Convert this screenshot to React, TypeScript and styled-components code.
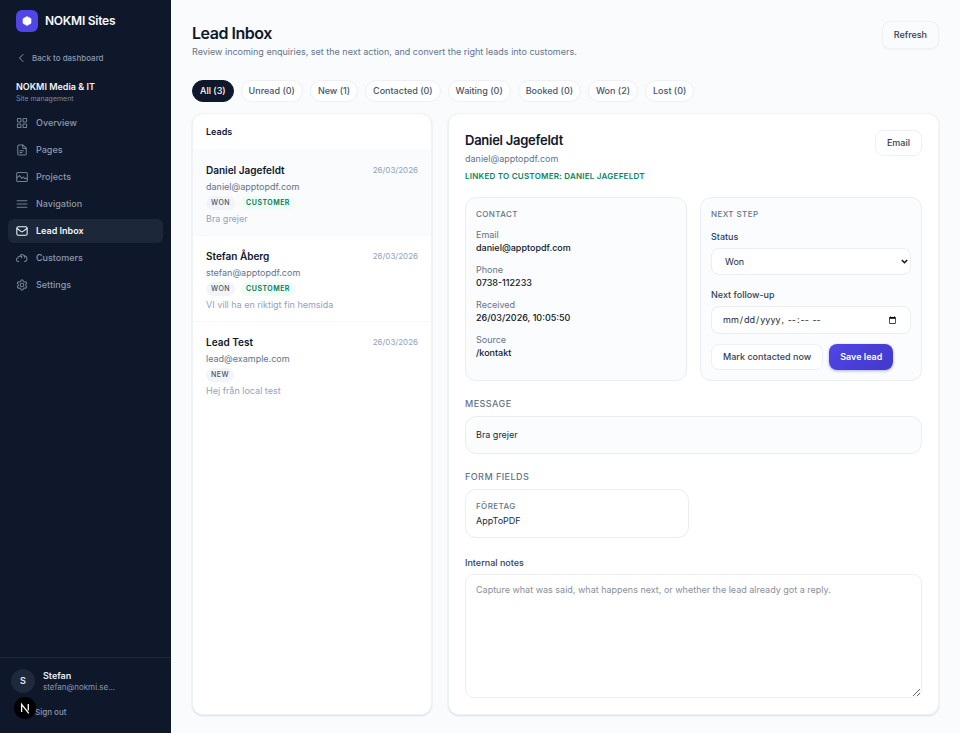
import React from "react";
import styled, { createGlobalStyle, css } from "styled-components";

const GlobalStyle = createGlobalStyle`
  *, *::before, *::after { box-sizing: border-box; }
  body { margin: 0; background: #f9fbfd; color: #0f172a; font-family: Inter, sans-serif; font-size: 9px; line-height: 14px; -webkit-font-smoothing: antialiased; }
  h1, h2, h3, p, dl, dd, ul { margin: 0; padding: 0; }
  ul { list-style: none; }
  button, input, select, textarea { font: inherit; color: inherit; }
  button { cursor: pointer; }
  a { color: inherit; text-decoration: none; }
`;

const Shell = styled.div`
  display: flex;
  min-height: 100vh;
`;

/* Sidebar */
const Sidebar = styled.aside`
  position: sticky;
  top: 0;
  flex: none;
  display: flex;
  flex-direction: column;
  width: 171px;
  height: 100vh;
  background: #0f172a;
  color: #8c99ad;
`;

const Brand = styled.div`
  display: flex;
  align-items: center;
  gap: 7px;
  height: 42px;
  padding: 0 16px;
  color: #f8fafc;
  font-size: 12px;
  font-weight: 600;
  letter-spacing: -0.02em;
`;

const BrandMark = styled.span`
  display: grid;
  place-items: center;
  width: 22px;
  height: 22px;
  border-radius: 6px;
  background: #5146e5;
`;

const BackLink = styled.a`
  display: flex;
  align-items: center;
  gap: 6px;
  margin: 9px 16px 0;
  font-size: 8px;
  font-weight: 500;
`;

const SiteInfo = styled.div`
  padding: 15px 16px 0;
`;

const SiteName = styled.div`
  color: #f1f5f9;
  font-size: 9px;
  font-weight: 600;
  line-height: 13px;
`;

const SiteCaption = styled.div`
  color: #7c8aa0;
  font-size: 7px;
  line-height: 11px;
`;

const NavList = styled.ul`
  display: flex;
  flex-direction: column;
  gap: 3px;
  padding: 7px 8px 0;
`;

const NavIcon = styled.svg`
  width: 12px;
  height: 12px;
  flex: none;
  fill: none;
  stroke: #718096;
  stroke-width: 1.5;
  stroke-linecap: round;
  stroke-linejoin: round;
`;

const NavLink = styled.a<{ $active?: boolean }>`
  display: flex;
  align-items: center;
  gap: 8px;
  height: 24px;
  padding: 0 8px;
  border-radius: 6px;
  font-weight: 500;
  ${(p) =>
    p.$active &&
    css`
      background: #1c283a;
      color: #f1f5f9;
      font-weight: 600;
      ${NavIcon} { stroke: #f1f5f9; }
    `}
`;

const Account = styled.div`
  margin-top: auto;
  padding: 11px 11px 14px;
  border-top: 1px solid #1c273a;
`;

const Profile = styled.div`
  display: flex;
  align-items: center;
  gap: 8px;
`;

const Avatar = styled.span`
  display: grid;
  place-items: center;
  width: 24px;
  height: 24px;
  border-radius: 50%;
  background: #1e293b;
  color: #e2e8f0;
  font-weight: 600;
`;

const ProfileName = styled.div`
  color: #e7ecf2;
  font-weight: 600;
  line-height: 13px;
`;

const ProfileEmail = styled.div`
  font-size: 8px;
  line-height: 11px;
`;

const SignOut = styled.button`
  display: block;
  margin-top: 12px;
  padding: 0 0 0 24px;
  border: 0;
  background: none;
  font-size: 8px;
  font-weight: 500;
  line-height: 14px;
`;

const DevBadge = styled.button`
  position: fixed;
  left: 14px;
  bottom: 14px;
  display: grid;
  place-items: center;
  width: 22px;
  height: 22px;
  padding: 0;
  border: 0;
  border-radius: 50%;
  background: #000;
`;

/* Main */
const Main = styled.main`
  flex: 1;
  min-width: 0;
  display: flex;
  flex-direction: column;
  padding: 21px 21px 18px;
`;

const PageHead = styled.header`
  display: flex;
  justify-content: space-between;
  align-items: flex-start;
`;

const PageTitle = styled.h1`
  margin-top: 2px;
  font-size: 16px;
  font-weight: 600;
  line-height: 20px;
  letter-spacing: -0.03em;
`;

const PageText = styled.p`
  margin-top: 2px;
  color: #64748b;
`;

const Button = styled.button<{ $primary?: boolean; $tall?: boolean }>`
  height: ${(p) => (p.$tall ? 28 : 26)}px;
  padding: 0 11px;
  border: 1px solid #edf1f5;
  border-radius: 8px;
  background: #fff;
  color: #334155;
  font-weight: 500;
  white-space: nowrap;
  ${(p) => p.$tall && css`background: #fafbfd; box-shadow: 0 1px 2px rgba(15, 23, 42, 0.03);`}
  ${(p) =>
    p.$primary &&
    css`
      padding: 0 10px;
      border-color: transparent;
      background: linear-gradient(135deg, #4f46e5, #4338ca) border-box;
      color: #fff;
      font-weight: 600;
      box-shadow: 0 1px 3px rgba(67, 56, 202, 0.4);
    `}
`;

const Filters = styled.nav`
  display: flex;
  flex-wrap: wrap;
  gap: 7px;
  margin: 21px 0 11px;
`;

const Filter = styled.button<{ $active?: boolean }>`
  height: 22px;
  padding: 0 7px;
  border: 1px solid ${(p) => (p.$active ? "#0f172a" : "#edf1f5")};
  border-radius: 11px;
  background: ${(p) => (p.$active ? "#0f172a" : "#fff")};
  color: ${(p) => (p.$active ? "#fff" : "#475569")};
  font-weight: 500;
`;

const Columns = styled.div`
  flex: 1;
  display: grid;
  grid-template-columns: 240px minmax(0, 1fr);
  gap: 16px;
`;

const Panel = styled.section`
  border: 1px solid #eff3f7;
  border-radius: 11px;
  background: #fff;
  box-shadow: 0 1px 2px rgba(15, 23, 42, 0.12);
  overflow: hidden;
`;

const PanelTitle = styled.h2`
  padding: 11px 13px 10px;
  border-bottom: 1px solid #f8fafc;
  font-size: 9px;
  font-weight: 600;
`;

const Lead = styled.li<{ $selected?: boolean }>`
  padding: 12px 13px 9px;
  border-bottom: 1px solid #f6f8fb;
  background: ${(p) => (p.$selected ? "#f9fbfd" : "#fff")};
  &:last-child { border-bottom: 0; }
`;

const LeadTop = styled.div`
  display: flex;
  justify-content: space-between;
  align-items: center;
`;

const LeadName = styled.h3`
  font-size: 10px;
  font-weight: 600;
  line-height: 16px;
`;

const LeadDate = styled.time`
  color: #94a3b8;
  font-size: 8px;
`;

const LeadEmail = styled.div`
  margin-top: 2px;
  color: #64748b;
`;

const Tags = styled.div`
  display: flex;
  gap: 6px;
  margin-top: 2px;
`;

const Tag = styled.span<{ $green?: boolean }>`
  height: 14px;
  padding: 0 5px;
  border-radius: 7px;
  background: ${(p) => (p.$green ? "#eefdf6" : "#f1f5f9")};
  color: ${(p) => (p.$green ? "#047857" : "#475569")};
  font-size: 7px;
  font-weight: ${(p) => (p.$green ? 600 : 500)};
  line-height: 14px;
  letter-spacing: 0.07em;
`;

const LeadText = styled.p`
  margin-top: 2px;
  color: #94a3b8;
`;

const Detail = styled(Panel)`
  padding: 16px;
`;

const DetailHead = styled.div`
  display: flex;
  justify-content: space-between;
  align-items: flex-start;
`;

const DetailName = styled.h2`
  font-size: 13px;
  font-weight: 600;
  line-height: 20px;
  letter-spacing: -0.02em;
`;

const DetailEmail = styled.p`
  margin-top: 2px;
  color: #64748b;
`;

const Linked = styled.p`
  margin-top: 3px;
  color: #05875f;
  font-size: 8px;
  font-weight: 600;
  letter-spacing: 0.03em;
`;

const Cards = styled.div`
  display: grid;
  grid-template-columns: 1fr 1fr;
  gap: 13px;
  margin-top: 14px;
`;

const Card = styled.div<{ $white?: boolean }>`
  padding: ${(p) => (p.$white ? "10px 10px 9px" : "10px")};
  border: 1px solid #e9eef3;
  border-radius: 11px;
  background: ${(p) => (p.$white ? "#fff" : "#fafcfd")};
`;

const CardTitle = styled.h3`
  color: #64748b;
  font-size: 8px;
  font-weight: 500;
  line-height: 12px;
  letter-spacing: 0.05em;
`;

const Facts = styled.dl`
  display: grid;
  gap: 8px;
  margin-top: 8px;
`;

const FactLabel = styled.dt`
  color: #64748b;
  line-height: 13px;
`;

const FactValue = styled.dd`
  font-weight: 500;
  color: #0f172a;
  line-height: 14px;
`;

const Label = styled.label`
  display: block;
  color: #334155;
  font-weight: 500;
`;

const Field = styled.div`
  margin-top: 10px;
  & + & { margin-top: 13px; }
`;

const controlStyle = css`
  display: block;
  width: 100%;
  border: 1px solid #e9eef3;
  border-radius: 8px;
  background: #fff;
  color: #1e293b;
`;

const SelectBox = styled.div`
  position: relative;
  margin-top: 4px;
`;

const Select = styled.select`
  ${controlStyle}
  appearance: none;
  height: 27px;
  padding: 0 13px;
`;

const Chevron = styled.svg`
  position: absolute;
  top: 10px;
  right: 3px;
  width: 7px;
  height: 7px;
  fill: none;
  stroke: #111;
  stroke-width: 1.5;
  pointer-events: none;
`;

const DateInput = styled.input`
  ${controlStyle}
  height: 28px;
  margin-top: 4px;
  padding: 0 11px 0 10px;
`;

const Actions = styled.div`
  display: flex;
  flex-wrap: wrap;
  gap: 6px;
  margin-top: 10px;
`;

const SectionTitle = styled.h3`
  margin: 16px 0 5px;
  color: #64748b;
  font-size: 9px;
  font-weight: 500;
  letter-spacing: 0.05em;
`;

const Message = styled(Card)`
  padding: 11px 10px;
  color: #1e293b;
`;

const FormFields = styled.div`
  display: grid;
  grid-template-columns: 1fr 1fr;
  gap: 9px;
`;

const FieldValue = styled.p`
  margin-top: 2px;
  color: #1e293b;
`;

const Notes = styled.div`
  margin-top: 18px;
`;

const TextArea = styled.textarea`
  ${controlStyle}
  height: 124px;
  margin-top: 4px;
  padding: 8px 10px;
  border-radius: 9px;
  resize: vertical;
  &::placeholder { color: #8a8f98; }
`;

const navItems = [
  { label: "Overview", icon: <><rect x="2" y="2" width="5" height="5" rx="1" /><rect x="10" y="2" width="5" height="5" rx="1" /><rect x="2" y="10" width="5" height="5" rx="1" /><rect x="10" y="10" width="5" height="5" rx="1" /></> },
  { label: "Pages", icon: <><path d="M10 1.500H4A1.500 1.500 0 0 0 2.500 3v11A1.500 1.500 0 0 0 4 15.500h9a1.500 1.500 0 0 0 1.500-1.500V6z" /><path d="M9.500 1.500V5a1.500 1.500 0 0 0 1.500 1.500h3.500M5.500 9.500h5M5.500 12.200h3" /></> },
  { label: "Projects", icon: <><rect x="1" y="2" width="15" height="13" rx="1.500" /><path d="M1 10 5 6.500l3.500 4 2-2 2 2.500 1-1 2.500 1.500" /></> },
  { label: "Navigation", icon: <path d="M1.500 4h14M1.500 8.500h14M1.500 13h14" /> },
  { label: "Lead Inbox", icon: <><rect x="1.200" y="2.500" width="14.600" height="12" rx="2" /><path d="m1.500 5 5.500 4a2.500 2.500 0 0 0 3 0l5.500-4" /></> },
  { label: "Customers", icon: <><path d="M4 13.500H3A2.500 2.500 0 0 1 2.500 8.600 3 3 0 0 1 5.500 6a3.200 3.200 0 0 1 6-.500 3.600 3.600 0 0 1 4 3.700c0 2.400-1.500 4.300-3.500 4.300" /><path d="M5.500 6A3 3 0 0 1 8 8M8 8V5.500M11.500 5.500A3.500 3.500 0 0 1 12.500 8" /></> },
  { label: "Settings", icon: <><path d="M7.200 1.500h2.600l.500 2 1.600.900 2-.600 1.300 2.300-1.500 1.500v1.800l1.500 1.500-1.300 2.300-2-.600-1.600.900-.500 2H7.200l-.500-2-1.600-.900-2 .600-1.300-2.300 1.500-1.500V7.600L1.800 6.100l1.300-2.300 2 .600 1.600-.900z" /><circle cx="8.500" cy="8.500" r="2.500" /></> },
];

const filters = ["All (3)", "Unread (0)", "New (1)", "Contacted (0)", "Waiting (0)", "Booked (0)", "Won (2)", "Lost (0)"];

const leads = [
  { name: "Daniel Jagefeldt", email: "daniel@apptopdf.com", status: "WON", customer: true, text: "Bra grejer" },
  { name: "Stefan Åberg", email: "stefan@apptopdf.com", status: "WON", customer: true, text: "VI vill ha en riktigt fin hemsida" },
  { name: "Lead Test", email: "lead@example.com", status: "NEW", customer: false, text: "Hej från local test" },
];

const facts = [
  ["Email", "daniel@apptopdf.com"],
  ["Phone", "0738-112233"],
  ["Received", "26/03/2026, 10:05:50"],
  ["Source", "/kontakt"],
];

export default function App() {
  return (
    <Shell>
      <GlobalStyle />
      <Sidebar>
        <Brand>
          <BrandMark>
            <svg width="10" height="10" viewBox="0 0 10 10"><path d="M5 .500 9 2.700v4.600L5 9.500 1 7.300V2.700z" fill="#fff" stroke="#fff" strokeWidth=".6" strokeLinejoin="round" /></svg>
          </BrandMark>
          NOKMI Sites
        </Brand>
        <BackLink href="#">
          <svg width="10" height="10" viewBox="0 0 10 10" fill="none" stroke="currentColor" strokeLinecap="round" strokeLinejoin="round"><path d="M7 1.500 3.500 5 7 8.500" /></svg>
          Back to dashboard
        </BackLink>
        <SiteInfo>
          <SiteName>NOKMI Media &amp; IT</SiteName>
          <SiteCaption>Site management</SiteCaption>
        </SiteInfo>
        <nav>
          <NavList>
            {navItems.map((n) => (
              <li key={n.label}>
                <NavLink href="#" $active={n.label === "Lead Inbox"}>
                  <NavIcon viewBox="0 0 17 17">{n.icon}</NavIcon>
                  {n.label}
                </NavLink>
              </li>
            ))}
          </NavList>
        </nav>
        <Account>
          <Profile>
            <Avatar>S</Avatar>
            <div>
              <ProfileName>Stefan</ProfileName>
              <ProfileEmail>stefan@nokmi.se...</ProfileEmail>
            </div>
          </Profile>
          <SignOut>Sign out</SignOut>
        </Account>
      </Sidebar>
      <Main>
        <PageHead>
          <div>
            <PageTitle>Lead Inbox</PageTitle>
            <PageText>Review incoming enquiries, set the next action, and convert the right leads into customers.</PageText>
          </div>
          <Button $tall>Refresh</Button>
        </PageHead>
        <Filters>
          {filters.map((f, i) => (
            <Filter key={f} $active={i === 0}>{f}</Filter>
          ))}
        </Filters>
        <Columns>
          <Panel>
            <PanelTitle>Leads</PanelTitle>
            <ul>
              {leads.map((l, i) => (
                <Lead key={l.name} $selected={i === 0}>
                  <LeadTop>
                    <LeadName>{l.name}</LeadName>
                    <LeadDate>26/03/2026</LeadDate>
                  </LeadTop>
                  <LeadEmail>{l.email}</LeadEmail>
                  <Tags>
                    <Tag>{l.status}</Tag>
                    {l.customer && <Tag $green>CUSTOMER</Tag>}
                  </Tags>
                  <LeadText>{l.text}</LeadText>
                </Lead>
              ))}
            </ul>
          </Panel>
          <Detail>
            <DetailHead>
              <div>
                <DetailName>Daniel Jagefeldt</DetailName>
                <DetailEmail>daniel@apptopdf.com</DetailEmail>
                <Linked>LINKED TO CUSTOMER: DANIEL JAGEFELDT</Linked>
              </div>
              <Button>Email</Button>
            </DetailHead>
            <Cards>
              <Card>
                <CardTitle>CONTACT</CardTitle>
                <Facts>
                  {facts.map(([k, v]) => (
                    <div key={k}>
                      <FactLabel>{k}</FactLabel>
                      <FactValue>{v}</FactValue>
                    </div>
                  ))}
                </Facts>
              </Card>
              <Card>
                <CardTitle>NEXT STEP</CardTitle>
                <Field>
                  <Label htmlFor="status">Status</Label>
                  <SelectBox>
                    <Select id="status" defaultValue="Won">
                      <option>New</option>
                      <option>Contacted</option>
                      <option>Waiting</option>
                      <option>Booked</option>
                      <option>Won</option>
                      <option>Lost</option>
                    </Select>
                    <Chevron viewBox="0 0 7 7" aria-hidden="true"><path d="M.800 2 3.500 4.700 6.200 2" /></Chevron>
                  </SelectBox>
                </Field>
                <Field>
                  <Label htmlFor="followup">Next follow-up</Label>
                  <DateInput id="followup" type="datetime-local" />
                </Field>
                <Actions>
                  <Button>Mark contacted now</Button>
                  <Button $primary>Save lead</Button>
                </Actions>
              </Card>
            </Cards>
            <SectionTitle>MESSAGE</SectionTitle>
            <Message>Bra grejer</Message>
            <SectionTitle>FORM FIELDS</SectionTitle>
            <FormFields>
              <Card $white>
                <CardTitle>FÖRETAG</CardTitle>
                <FieldValue>AppToPDF</FieldValue>
              </Card>
            </FormFields>
            <Notes>
              <Label htmlFor="notes">Internal notes</Label>
              <TextArea id="notes" placeholder="Capture what was said, what happens next, or whether the lead already got a reply." />
            </Notes>
          </Detail>
        </Columns>
      </Main>
      <DevBadge aria-label="Open developer tools">
        <svg width="22" height="22" viewBox="0 0 22 22" fill="none" stroke="#fff" strokeWidth="1.300">
          <path d="M7.600 15V7.300l7.200 9M14.300 7v6.500" />
        </svg>
      </DevBadge>
    </Shell>
  );
}
